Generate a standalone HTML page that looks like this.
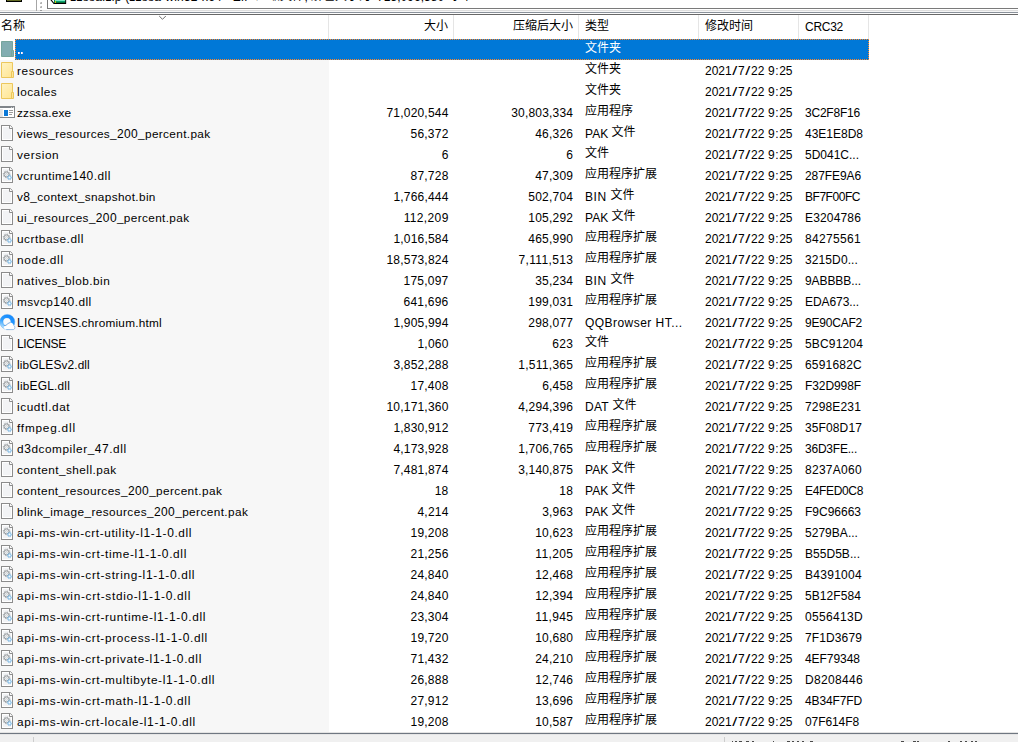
<!DOCTYPE html><html><head><meta charset="utf-8"><title>zzssa.zip</title><style>

html,body{margin:0;padding:0}
body{width:1018px;height:742px;overflow:hidden;background:#fff;position:relative;font-family:"Liberation Sans",sans-serif;font-size:12px;line-height:21px;color:#000}
div,span,svg,i{position:absolute;display:block}
span{white-space:pre;top:1px;height:21px}
.r{left:0;width:1018px;height:21px}
.cj{top:-0.6px;font-family:"Liberation Sans","Noto Sans CJK SC",sans-serif;font-size:12px;color:#000}
.hd{top:15.5px}
.ad{top:-13.6px}
.sel .cj{color:#fff}
.ic{left:0;top:2px;width:16px;height:16px;overflow:visible}
.sz{text-align:right}
.nm{font-size:11.8px}
.nm em{font-style:normal;font-size:12px}
.dt b{font-weight:normal;margin:0 1.5px;transform:scaleX(1.5)}
.dt u{text-decoration:none;padding:0 .55px}
.dt s{text-decoration:none;padding:0 .15px}
.dt u,.dt s{position:static;display:inline}
.dt b{position:static;display:inline-block}
.vl{top:15px;width:1px;height:24px;background:#e5e5e5}

</style></head><body>
<svg width="0" height="0" style="left:-10px;top:-10px"><defs>

<linearGradient id="fg" x1="0" y1="0" x2="1" y2="1"><stop offset="0" stop-color="#fff3c4"/><stop offset="1" stop-color="#ffe48f"/></linearGradient>
<symbol id="i-folder" viewBox="0 0 16 16" overflow="visible">
 <path d="M1.5 0.5H12.5V9.5H13.5V15.5H1.5Z" fill="url(#fg)" stroke="#ecc75c"/>
 <path d="M11.5 15V9.5H13" fill="none" stroke="#ecc75c"/>
</symbol>
<symbol id="i-folders" viewBox="0 0 16 16" overflow="visible">
 <path d="M1.5 0.5H12.5V9.5H13.5V15.5H1.5Z" fill="#82adb1" stroke="#76a59c"/>
 <path d="M11.5 15V9.5H13" fill="none" stroke="#76a59c"/>
</symbol>
<symbol id="i-file" viewBox="0 0 16 16" overflow="visible">
 <path d="M1.5 0.5H10.3L12.5 2.7V15.5H1.5Z" fill="#fff" stroke="#8c8c8c"/>
 <rect x="3" y="2" width="8" height="12" fill="#f2f3f5"/>
 <path d="M9.5 1V3.5H12" fill="#fff" stroke="#8c8c8c"/>
 <path d="M1 0h1v1h-1zM1 15h1v1h-1zM12 15h1v1h-1z" fill="#8c8c8c"/>
</symbol>
<symbol id="i-dll" viewBox="0 0 16 16" overflow="visible">
 <use href="#i-file"/>
 <circle cx="6.5" cy="7.4" r="3.3" fill="none" stroke="#8a8e91" stroke-width=".9" stroke-dasharray="1.1 1.49"/>
 <circle cx="6.5" cy="7.4" r="2.5" fill="#f1f4f6" stroke="#95999c" stroke-width="1"/>
 <circle cx="6.5" cy="7.4" r=".9" fill="#fff" stroke="#b3b7ba" stroke-width=".6"/>
 <circle cx="9.5" cy="10.4" r="2.3" fill="none" stroke="#7bb6e0" stroke-width=".8" stroke-dasharray=".9 .9"/>
 <circle cx="9.5" cy="10.4" r="1.6" fill="#dcedf8" stroke="#77b5e3" stroke-width=".9"/>
 <circle cx="9.5" cy="10.4" r=".5" fill="#fff"/>
</symbol>
<symbol id="i-exe" viewBox="0 0 16 16" overflow="visible">
 <rect x="-1" y="2" width="16" height="12" fill="#fff"/>
 <rect x="-1" y="2" width="16" height="2" fill="#80858a"/>
 <rect x="0" y="5" width="2.8" height="9" fill="#e3e3e3"/>
 <rect x="14" y="2" width="1" height="12" fill="#84888b"/>
 <rect x="-1" y="13" width="16" height="1" fill="#84888b"/>
 <rect x="11" y="3" width="1" height="1" fill="#c8cacc"/><rect x="13" y="3" width="1" height="1" fill="#c8cacc"/>
 <rect x="4" y="6" width="4" height="6" fill="#0a78d7"/>
 <rect x="9" y="6" width="4" height="1" fill="#9b9b9b"/><rect x="9" y="8" width="4" height="1" fill="#9b9b9b"/><rect x="9" y="10" width="3" height="1" fill="#9b9b9b"/>
</symbol>
<linearGradient id="qg" x1="0.75" y1="0.1" x2="0.2" y2="1"><stop offset="0" stop-color="#168aff"/><stop offset=".5" stop-color="#2b9eff"/><stop offset=".8" stop-color="#8fcfff"/><stop offset="1" stop-color="#d4eeff"/></linearGradient>
<symbol id="i-qq" viewBox="0 0 16 16" overflow="visible">
 <path fill-rule="evenodd" fill="url(#qg)" stroke="#4c9ee8" stroke-width=".4" d="M7.3 0.4A7.5 7.5 0 1 0 7.3 15.4A7.5 7.5 0 1 0 7.3 0.4ZM6.9 4.1A3.6 3.6 0 1 1 6.9 11.3A3.6 3.6 0 1 1 6.9 4.1Z"/>
 <circle cx="6.9" cy="7.7" r="3.5" fill="#fbfbfc"/>
 <path d="M3.9 12.6C4.6 11.3 6 11.4 7 10.9C8.2 9 10 8.2 11.4 8.7C12.8 9.2 13.6 10.5 13.7 11.6C15.3 12.1 15.4 15.1 13.4 15.6H6.2C4.6 15.6 3.4 14.2 3.9 12.6Z" fill="#fff"/>
 <path d="M6.2 15.6H13.4C15.4 15.1 15.3 12.1 13.7 11.6" fill="none" stroke="#5a9bdc" stroke-width=".6"/>
 <path d="M4.2 11.7C6 11.6 6.6 10.6 7.6 9.9C8.6 9 9.4 8.7 10.4 8.6" stroke="#3c84d2" stroke-width=".7" fill="none"/>
</symbol>

</defs></svg>
<div style="left:0;top:0;width:1018px;height:10px;background:#fff"></div>
<div style="left:7px;top:0;width:14px;height:1px;background:#636b24"></div>
<div style="left:6px;top:1px;width:16px;height:1px;background:#000"></div><div style="left:6px;top:0;width:1px;height:1px;background:#000"></div><div style="left:21px;top:0;width:1px;height:1px;background:#000"></div>
<div style="left:36px;top:0;width:1px;height:11px;background:#a6a6a6"></div>
<div style="left:40px;top:2px;width:2px;height:2px;background:linear-gradient(135deg,#d4d4d4 50%,#b4b4b4 50%)"></div>
<div style="left:40px;top:6px;width:2px;height:2px;background:linear-gradient(135deg,#d4d4d4 50%,#b4b4b4 50%)"></div>
<div style="left:47px;top:-3px;width:971px;height:12px;border:1px solid #7a7a7a;border-top:none;border-right:none;box-sizing:border-box;background:#fff"></div>
<svg style="left:49px;top:0" width="19" height="5" viewBox="0 0 19 5"><defs><linearGradient id="zg" x1="0" y1="0" x2="0" y2="1"><stop offset="0" stop-color="#b9f8e0"/><stop offset=".3" stop-color="#4fdcaa"/><stop offset=".45" stop-color="#0aa878"/><stop offset=".75" stop-color="#007a50"/><stop offset="1" stop-color="#1f5a10"/></linearGradient></defs><path d="M1.3 -1L4.9 3.5H16.6V-1" fill="#fff" stroke="#000" stroke-width="1.1"/><rect x="5" y="0" width="11.2" height="3" fill="url(#zg)"/><rect x="5" y="0" width="1" height="3" fill="#0b8458"/><rect x="6" y="1" width="1" height="2" fill="#d6c400"/></svg>
<div style="left:0;top:10px;width:1018px;height:1px;background:#dedede"></div>
<div style="left:0;top:11px;width:1018px;height:1px;background:#f6f6f6"></div>
<div style="left:0;top:12px;width:1018px;height:1px;background:#8b929b"></div>
<div style="left:0;top:13px;width:1018px;height:1px;background:#fdfdfd"></div>
<div style="left:0;top:14px;width:1018px;height:1px;background:#686868"></div>
<div style="left:36px;top:0;width:1px;height:11px;background:#a6a6a6"></div>
<div style="left:40px;top:10px;width:2px;height:1px;background:#9a9a9a"></div>
<div style="left:0;top:0;width:1018px;height:5px;overflow:hidden">
<span id="addr1" style="left:70.3px;top:-13.5px;letter-spacing:0.215px">zzssa.zip (zzssa-win32-x64 - ZIP </span>
<span class="cj ad" style="left:256px">压缩文件</span>
<span style="left:304.5px;top:-13.5px">,</span>
<span class="cj ad" style="left:311px">解包大小为</span>
<span style="left:377px;top:-13.5px;letter-spacing:.05px">715,096,380</span>
<span class="cj ad" style="left:450px">字节</span>
</div>
<div style="left:0;top:60px;width:329px;height:672px;background:#f7f7f7"></div>
<div class="vl" style="left:328px"></div>
<div class="vl" style="left:453px"></div>
<div class="vl" style="left:578px"></div>
<div class="vl" style="left:698px"></div>
<div class="vl" style="left:798px"></div>
<div class="vl" style="left:868px"></div>
<svg style="left:158px;top:15px" width="10" height="6" viewBox="0 0 10 6"><path d="M1.2 1L4.5 4.3L7.8 1" fill="none" stroke="#6d6d6d" stroke-width="1"/></svg>
<span class="cj hd" style="left:1px">名称</span>
<span class="cj hd" style="left:424px">大小</span>
<span class="cj hd" style="left:513px">压缩后大小</span>
<span class="cj hd" style="left:585px">类型</span>
<span class="cj hd" style="left:705px">修改时间</span>
<span id="hcrc" style="left:805px;top:17px;letter-spacing:-0.272px">CRC32</span>
<div class="r sel" style="top:39px">
<div style="left:0;top:0;width:15px;height:21px;background:#fff"></div>
<div style="left:15px;top:0;width:854px;height:21px;background:#0078d7"></div>
<div style="left:15px;top:0;width:854px;height:1px;background:repeating-linear-gradient(90deg,#0078d7 0 1px,#ff8728 1px 2px)"></div>
<div style="left:15px;top:20px;width:854px;height:1px;background:repeating-linear-gradient(90deg,#0078d7 0 1px,#ff8728 1px 2px)"></div>
<div style="left:15px;top:0;width:1px;height:21px;background:repeating-linear-gradient(180deg,#0078d7 0 1px,#ff8728 1px 2px)"></div>
<div style="left:868px;top:0;width:1px;height:21px;background:repeating-linear-gradient(180deg,#ff8728 0 1px,#0078d7 1px 2px)"></div>
<svg class="ic" viewBox="0 0 16 16"><use href="#i-folders"/></svg>
<div style="left:18px;top:13px;width:2px;height:2px;background:linear-gradient(90deg,#fff 50%,#d9c8f0 50%)"></div><div style="left:21px;top:13px;width:2px;height:2px;background:linear-gradient(90deg,#fff 50%,#d9c8f0 50%)"></div>
<span class="cj" style="left:585px">文件夹</span>
</div>
<div class="r" style="top:60px">
<svg class="ic" viewBox="0 0 16 16"><use href="#i-folder"/></svg>
<span class="nm" style="left:17px;letter-spacing:0.589px">resources</span>
<span class="cj" style="left:585px">文件夹</span>
<span class="dt" style="left:705px">2021<b>/</b>7<b>/</b>22<s> </s>9<u>:</u>25</span>
</div>
<div class="r" style="top:81px">
<svg class="ic" viewBox="0 0 16 16"><use href="#i-folder"/></svg>
<span class="nm" style="left:17px;letter-spacing:0.479px"><em>l</em>oca<em>l</em>es</span>
<span class="cj" style="left:585px">文件夹</span>
<span class="dt" style="left:705px">2021<b>/</b>7<b>/</b>22<s> </s>9<u>:</u>25</span>
</div>
<div class="r" style="top:102px">
<svg class="ic" viewBox="0 0 16 16"><use href="#i-exe"/></svg>
<span class="nm" style="left:17px;letter-spacing:0.205px">zzssa.exe</span>
<span class="sz" style="right:569.51px;letter-spacing:0.194px">71,020,544</span>
<span class="sz" style="right:444.81px;letter-spacing:0.194px">30,803,334</span>
<span class="cj" style="left:585px">应用程序</span>
<span class="dt" style="left:705px">2021<b>/</b>7<b>/</b>22<s> </s>9<u>:</u>25</span>
<span class="cr" style="left:805px;letter-spacing:-0.213px">3C2F8F16</span>
</div>
<div class="r" style="top:123px">
<svg class="ic" viewBox="0 0 16 16"><use href="#i-file"/></svg>
<span class="nm" style="left:17px;letter-spacing:0.349px">views_resources_<em>200</em>_percent.pak</span>
<span class="sz" style="right:569.48px;letter-spacing:0.216px">56,372</span>
<span class="sz" style="right:444.78px;letter-spacing:0.216px">46,326</span>
<span class="ty" style="left:585px;letter-spacing:0.033px">PAK </span>
<span class="cj" style="left:611.6px">文件</span>
<span class="dt" style="left:705px">2021<b>/</b>7<b>/</b>22<s> </s>9<u>:</u>25</span>
<span class="cr" style="left:805px;letter-spacing:-0.006px">43E1E8D8</span>
</div>
<div class="r" style="top:144px">
<svg class="ic" viewBox="0 0 16 16"><use href="#i-file"/></svg>
<span class="nm" style="left:17px;letter-spacing:0.596px">version</span>
<span class="sz" style="right:569.39px;letter-spacing:0.312px">6</span>
<span class="sz" style="right:444.69px;letter-spacing:0.312px">6</span>
<span class="cj" style="left:585px">文件</span>
<span class="dt" style="left:705px">2021<b>/</b>7<b>/</b>22<s> </s>9<u>:</u>25</span>
<span class="cr" style="left:805px;letter-spacing:-0.003px">5D041C...</span>
</div>
<div class="r" style="top:165px">
<svg class="ic" viewBox="0 0 16 16"><use href="#i-dll"/></svg>
<span class="nm" style="left:17px;letter-spacing:0.465px">vcruntime<em>140</em>.d<em>ll</em></span>
<span class="sz" style="right:569.48px;letter-spacing:0.216px">87,728</span>
<span class="sz" style="right:444.78px;letter-spacing:0.216px">47,309</span>
<span class="cj" style="left:585px">应用程序扩展</span>
<span class="dt" style="left:705px">2021<b>/</b>7<b>/</b>22<s> </s>9<u>:</u>25</span>
<span class="cr" style="left:805px;letter-spacing:-0.09px">287FE9A6</span>
</div>
<div class="r" style="top:186px">
<svg class="ic" viewBox="0 0 16 16"><use href="#i-file"/></svg>
<span class="nm" style="left:17px;letter-spacing:0.354px">v<em>8</em>_context_snapshot.bin</span>
<span class="sz" style="right:569.52px;letter-spacing:0.179px">1,766,444</span>
<span class="sz" style="right:444.77px;letter-spacing:0.23px">502,704</span>
<span class="ty" style="left:585px;letter-spacing:0.564px">BIN </span>
<span class="cj" style="left:610.6px">文件</span>
<span class="dt" style="left:705px">2021<b>/</b>7<b>/</b>22<s> </s>9<u>:</u>25</span>
<span class="cr" style="left:805px;letter-spacing:-0.461px">BF7F00FC</span>
</div>
<div class="r" style="top:207px">
<svg class="ic" viewBox="0 0 16 16"><use href="#i-file"/></svg>
<span class="nm" style="left:17px;letter-spacing:0.362px">ui_resources_<em>200</em>_percent.pak</span>
<span class="sz" style="right:569.34px;letter-spacing:0.357px">112,209</span>
<span class="sz" style="right:444.77px;letter-spacing:0.23px">105,292</span>
<span class="ty" style="left:585px;letter-spacing:0.033px">PAK </span>
<span class="cj" style="left:611.6px">文件</span>
<span class="dt" style="left:705px">2021<b>/</b>7<b>/</b>22<s> </s>9<u>:</u>25</span>
<span class="cr" style="left:805px;letter-spacing:0.158px">E3204786</span>
</div>
<div class="r" style="top:228px">
<svg class="ic" viewBox="0 0 16 16"><use href="#i-dll"/></svg>
<span class="nm" style="left:17px;letter-spacing:0.547px">ucrtbase.d<em>ll</em></span>
<span class="sz" style="right:569.52px;letter-spacing:0.179px">1,016,584</span>
<span class="sz" style="right:444.77px;letter-spacing:0.23px">465,990</span>
<span class="cj" style="left:585px">应用程序扩展</span>
<span class="dt" style="left:705px">2021<b>/</b>7<b>/</b>22<s> </s>9<u>:</u>25</span>
<span class="cr" style="left:805px;letter-spacing:0.326px">84275561</span>
</div>
<div class="r" style="top:249px">
<svg class="ic" viewBox="0 0 16 16"><use href="#i-dll"/></svg>
<span class="nm" style="left:17px;letter-spacing:0.67px">node.d<em>ll</em></span>
<span class="sz" style="right:569.51px;letter-spacing:0.194px">18,573,824</span>
<span class="sz" style="right:444.62px;letter-spacing:0.377px">7,111,513</span>
<span class="cj" style="left:585px">应用程序扩展</span>
<span class="dt" style="left:705px">2021<b>/</b>7<b>/</b>22<s> </s>9<u>:</u>25</span>
<span class="cr" style="left:805px;letter-spacing:0.106px">3215D0...</span>
</div>
<div class="r" style="top:270px">
<svg class="ic" viewBox="0 0 16 16"><use href="#i-file"/></svg>
<span class="nm" style="left:17px;letter-spacing:0.498px">natives_b<em>l</em>ob.bin</span>
<span class="sz" style="right:569.47px;letter-spacing:0.23px">175,097</span>
<span class="sz" style="right:444.78px;letter-spacing:0.216px">35,234</span>
<span class="ty" style="left:585px;letter-spacing:0.564px">BIN </span>
<span class="cj" style="left:610.6px">文件</span>
<span class="dt" style="left:705px">2021<b>/</b>7<b>/</b>22<s> </s>9<u>:</u>25</span>
<span class="cr" style="left:805px;letter-spacing:-0.078px">9ABBBB...</span>
</div>
<div class="r" style="top:291px">
<svg class="ic" viewBox="0 0 16 16"><use href="#i-dll"/></svg>
<span class="nm" style="left:17px;letter-spacing:0.449px">msvcp<em>140</em>.d<em>ll</em></span>
<span class="sz" style="right:569.47px;letter-spacing:0.23px">641,696</span>
<span class="sz" style="right:444.77px;letter-spacing:0.23px">199,031</span>
<span class="cj" style="left:585px">应用程序扩展</span>
<span class="dt" style="left:705px">2021<b>/</b>7<b>/</b>22<s> </s>9<u>:</u>25</span>
<span class="cr" style="left:805px;letter-spacing:-0.078px">EDA673...</span>
</div>
<div class="r" style="top:312px">
<svg class="ic" viewBox="0 0 16 16"><use href="#i-qq"/></svg>
<span class="nm" style="left:17px;letter-spacing:0.221px"><em>LICENSES</em>.chromium.htm<em>l</em></span>
<span class="sz" style="right:569.52px;letter-spacing:0.179px">1,905,994</span>
<span class="sz" style="right:444.77px;letter-spacing:0.23px">298,077</span>
<span class="ty" style="left:585px;letter-spacing:0.454px">QQBrowser HT...</span>
<span class="dt" style="left:705px">2021<b>/</b>7<b>/</b>22<s> </s>9<u>:</u>25</span>
<span class="cr" style="left:805px;letter-spacing:-0.213px">9E90CAF2</span>
</div>
<div class="r" style="top:333px">
<svg class="ic" viewBox="0 0 16 16"><use href="#i-file"/></svg>
<span class="nm" style="left:17px;letter-spacing:-0.351px"><em>LICENSE</em></span>
<span class="sz" style="right:569.51px;letter-spacing:0.194px">1,060</span>
<span class="sz" style="right:444.68px;letter-spacing:0.323px">623</span>
<span class="cj" style="left:585px">文件</span>
<span class="dt" style="left:705px">2021<b>/</b>7<b>/</b>22<s> </s>9<u>:</u>25</span>
<span class="cr" style="left:805px;letter-spacing:0.16px">5BC91204</span>
</div>
<div class="r" style="top:354px">
<svg class="ic" viewBox="0 0 16 16"><use href="#i-dll"/></svg>
<span class="nm" style="left:17px;letter-spacing:0.096px"><em>l</em>ib<em>GLES</em>v<em>2</em>.d<em>ll</em></span>
<span class="sz" style="right:569.52px;letter-spacing:0.179px">3,852,288</span>
<span class="sz" style="right:444.72px;letter-spacing:0.278px">1,511,365</span>
<span class="cj" style="left:585px">应用程序扩展</span>
<span class="dt" style="left:705px">2021<b>/</b>7<b>/</b>22<s> </s>9<u>:</u>25</span>
<span class="cr" style="left:805px;letter-spacing:0.201px">6591682C</span>
</div>
<div class="r" style="top:375px">
<svg class="ic" viewBox="0 0 16 16"><use href="#i-dll"/></svg>
<span class="nm" style="left:17px;letter-spacing:0.194px"><em>l</em>ib<em>EGL</em>.d<em>ll</em></span>
<span class="sz" style="right:569.48px;letter-spacing:0.216px">17,408</span>
<span class="sz" style="right:444.81px;letter-spacing:0.194px">6,458</span>
<span class="cj" style="left:585px">应用程序扩展</span>
<span class="dt" style="left:705px">2021<b>/</b>7<b>/</b>22<s> </s>9<u>:</u>25</span>
<span class="cr" style="left:805px;letter-spacing:-0.088px">F32D998F</span>
</div>
<div class="r" style="top:396px">
<svg class="ic" viewBox="0 0 16 16"><use href="#i-file"/></svg>
<span class="nm" style="left:17px;letter-spacing:0.592px">icudt<em>l</em>.dat</span>
<span class="sz" style="right:569.51px;letter-spacing:0.194px">10,171,360</span>
<span class="sz" style="right:444.82px;letter-spacing:0.179px">4,294,396</span>
<span class="ty" style="left:585px;letter-spacing:0.291px">DAT </span>
<span class="cj" style="left:612.4px">文件</span>
<span class="dt" style="left:705px">2021<b>/</b>7<b>/</b>22<s> </s>9<u>:</u>25</span>
<span class="cr" style="left:805px;letter-spacing:0.158px">7298E231</span>
</div>
<div class="r" style="top:417px">
<svg class="ic" viewBox="0 0 16 16"><use href="#i-dll"/></svg>
<span class="nm" style="left:17px;letter-spacing:0.785px">ffmpeg.d<em>ll</em></span>
<span class="sz" style="right:569.52px;letter-spacing:0.179px">1,830,912</span>
<span class="sz" style="right:444.77px;letter-spacing:0.23px">773,419</span>
<span class="cj" style="left:585px">应用程序扩展</span>
<span class="dt" style="left:705px">2021<b>/</b>7<b>/</b>22<s> </s>9<u>:</u>25</span>
<span class="cr" style="left:805px;letter-spacing:0.119px">35F08D17</span>
</div>
<div class="r" style="top:438px">
<svg class="ic" viewBox="0 0 16 16"><use href="#i-dll"/></svg>
<span class="nm" style="left:17px;letter-spacing:0.563px">d<em>3</em>dcompi<em>l</em>er_<em>47</em>.d<em>ll</em></span>
<span class="sz" style="right:569.52px;letter-spacing:0.179px">4,173,928</span>
<span class="sz" style="right:444.82px;letter-spacing:0.179px">1,706,765</span>
<span class="cj" style="left:585px">应用程序扩展</span>
<span class="dt" style="left:705px">2021<b>/</b>7<b>/</b>22<s> </s>9<u>:</u>25</span>
<span class="cr" style="left:805px;letter-spacing:-0.226px">36D3FE...</span>
</div>
<div class="r" style="top:459px">
<svg class="ic" viewBox="0 0 16 16"><use href="#i-file"/></svg>
<span class="nm" style="left:17px;letter-spacing:0.457px">content_she<em>ll</em>.pak</span>
<span class="sz" style="right:569.52px;letter-spacing:0.179px">7,481,874</span>
<span class="sz" style="right:444.82px;letter-spacing:0.179px">3,140,875</span>
<span class="ty" style="left:585px;letter-spacing:0.033px">PAK </span>
<span class="cj" style="left:611.6px">文件</span>
<span class="dt" style="left:705px">2021<b>/</b>7<b>/</b>22<s> </s>9<u>:</u>25</span>
<span class="cr" style="left:805px;letter-spacing:0.283px">8237A060</span>
</div>
<div class="r" style="top:480px">
<svg class="ic" viewBox="0 0 16 16"><use href="#i-file"/></svg>
<span class="nm" style="left:17px;letter-spacing:0.404px">content_resources_<em>200</em>_percent.pak</span>
<span class="sz" style="right:569.38px;letter-spacing:0.32px">18</span>
<span class="sz" style="right:444.68px;letter-spacing:0.32px">18</span>
<span class="ty" style="left:585px;letter-spacing:0.033px">PAK </span>
<span class="cj" style="left:611.6px">文件</span>
<span class="dt" style="left:705px">2021<b>/</b>7<b>/</b>22<s> </s>9<u>:</u>25</span>
<span class="cr" style="left:805px;letter-spacing:-0.338px">E4FED0C8</span>
</div>
<div class="r" style="top:501px">
<svg class="ic" viewBox="0 0 16 16"><use href="#i-file"/></svg>
<span class="nm" style="left:17px;letter-spacing:0.408px">b<em>l</em>ink_image_resources_<em>200</em>_percent.pak</span>
<span class="sz" style="right:569.51px;letter-spacing:0.194px">4,214</span>
<span class="sz" style="right:444.81px;letter-spacing:0.194px">3,963</span>
<span class="ty" style="left:585px;letter-spacing:0.033px">PAK </span>
<span class="cj" style="left:611.6px">文件</span>
<span class="dt" style="left:705px">2021<b>/</b>7<b>/</b>22<s> </s>9<u>:</u>25</span>
<span class="cr" style="left:805px;letter-spacing:-0.006px">F9C96663</span>
</div>
<div class="r" style="top:522px">
<svg class="ic" viewBox="0 0 16 16"><use href="#i-dll"/></svg>
<span class="nm" style="left:17px;letter-spacing:0.62px">api-ms-win-crt-uti<em>l</em>ity-<em>l1</em>-<em>1</em>-<em>0</em>.d<em>ll</em></span>
<span class="sz" style="right:569.48px;letter-spacing:0.216px">19,208</span>
<span class="sz" style="right:444.78px;letter-spacing:0.216px">10,623</span>
<span class="cj" style="left:585px">应用程序扩展</span>
<span class="dt" style="left:705px">2021<b>/</b>7<b>/</b>22<s> </s>9<u>:</u>25</span>
<span class="cr" style="left:805px;letter-spacing:0.031px">5279BA...</span>
</div>
<div class="r" style="top:543px">
<svg class="ic" viewBox="0 0 16 16"><use href="#i-dll"/></svg>
<span class="nm" style="left:17px;letter-spacing:0.667px">api-ms-win-crt-time-<em>l1</em>-<em>1</em>-<em>0</em>.d<em>ll</em></span>
<span class="sz" style="right:569.48px;letter-spacing:0.216px">21,256</span>
<span class="sz" style="right:444.63px;letter-spacing:0.365px">11,205</span>
<span class="cj" style="left:585px">应用程序扩展</span>
<span class="dt" style="left:705px">2021<b>/</b>7<b>/</b>22<s> </s>9<u>:</u>25</span>
<span class="cr" style="left:805px;letter-spacing:0.033px">B55D5B...</span>
</div>
<div class="r" style="top:564px">
<svg class="ic" viewBox="0 0 16 16"><use href="#i-dll"/></svg>
<span class="nm" style="left:17px;letter-spacing:0.674px">api-ms-win-crt-string-<em>l1</em>-<em>1</em>-<em>0</em>.d<em>ll</em></span>
<span class="sz" style="right:569.48px;letter-spacing:0.216px">24,840</span>
<span class="sz" style="right:444.78px;letter-spacing:0.216px">12,468</span>
<span class="cj" style="left:585px">应用程序扩展</span>
<span class="dt" style="left:705px">2021<b>/</b>7<b>/</b>22<s> </s>9<u>:</u>25</span>
<span class="cr" style="left:805px;letter-spacing:0.283px">B4391004</span>
</div>
<div class="r" style="top:585px">
<svg class="ic" viewBox="0 0 16 16"><use href="#i-dll"/></svg>
<span class="nm" style="left:17px;letter-spacing:0.69px">api-ms-win-crt-stdio-<em>l1</em>-<em>1</em>-<em>0</em>.d<em>ll</em></span>
<span class="sz" style="right:569.48px;letter-spacing:0.216px">24,840</span>
<span class="sz" style="right:444.78px;letter-spacing:0.216px">12,394</span>
<span class="cj" style="left:585px">应用程序扩展</span>
<span class="dt" style="left:705px">2021<b>/</b>7<b>/</b>22<s> </s>9<u>:</u>25</span>
<span class="cr" style="left:805px;letter-spacing:0.076px">5B12F584</span>
</div>
<div class="r" style="top:606px">
<svg class="ic" viewBox="0 0 16 16"><use href="#i-dll"/></svg>
<span class="nm" style="left:17px;letter-spacing:0.668px">api-ms-win-crt-runtime-<em>l1</em>-<em>1</em>-<em>0</em>.d<em>ll</em></span>
<span class="sz" style="right:569.48px;letter-spacing:0.216px">23,304</span>
<span class="sz" style="right:444.63px;letter-spacing:0.365px">11,945</span>
<span class="cj" style="left:585px">应用程序扩展</span>
<span class="dt" style="left:705px">2021<b>/</b>7<b>/</b>22<s> </s>9<u>:</u>25</span>
<span class="cr" style="left:805px;letter-spacing:0.326px">0556413D</span>
</div>
<div class="r" style="top:627px">
<svg class="ic" viewBox="0 0 16 16"><use href="#i-dll"/></svg>
<span class="nm" style="left:17px;letter-spacing:0.663px">api-ms-win-crt-process-<em>l1</em>-<em>1</em>-<em>0</em>.d<em>ll</em></span>
<span class="sz" style="right:569.48px;letter-spacing:0.216px">19,720</span>
<span class="sz" style="right:444.78px;letter-spacing:0.216px">10,680</span>
<span class="cj" style="left:585px">应用程序扩展</span>
<span class="dt" style="left:705px">2021<b>/</b>7<b>/</b>22<s> </s>9<u>:</u>25</span>
<span class="cr" style="left:805px;letter-spacing:0.119px">7F1D3679</span>
</div>
<div class="r" style="top:648px">
<svg class="ic" viewBox="0 0 16 16"><use href="#i-dll"/></svg>
<span class="nm" style="left:17px;letter-spacing:0.663px">api-ms-win-crt-private-<em>l1</em>-<em>1</em>-<em>0</em>.d<em>ll</em></span>
<span class="sz" style="right:569.48px;letter-spacing:0.216px">71,432</span>
<span class="sz" style="right:444.78px;letter-spacing:0.216px">24,210</span>
<span class="cj" style="left:585px">应用程序扩展</span>
<span class="dt" style="left:705px">2021<b>/</b>7<b>/</b>22<s> </s>9<u>:</u>25</span>
<span class="cr" style="left:805px;letter-spacing:-0.049px">4EF79348</span>
</div>
<div class="r" style="top:669px">
<svg class="ic" viewBox="0 0 16 16"><use href="#i-dll"/></svg>
<span class="nm" style="left:17px;letter-spacing:0.661px">api-ms-win-crt-mu<em>l</em>tibyte-<em>l1</em>-<em>1</em>-<em>0</em>.d<em>ll</em></span>
<span class="sz" style="right:569.48px;letter-spacing:0.216px">26,888</span>
<span class="sz" style="right:444.78px;letter-spacing:0.216px">12,746</span>
<span class="cj" style="left:585px">应用程序扩展</span>
<span class="dt" style="left:705px">2021<b>/</b>7<b>/</b>22<s> </s>9<u>:</u>25</span>
<span class="cr" style="left:805px;letter-spacing:0.326px">D8208446</span>
</div>
<div class="r" style="top:690px">
<svg class="ic" viewBox="0 0 16 16"><use href="#i-dll"/></svg>
<span class="nm" style="left:17px;letter-spacing:0.669px">api-ms-win-crt-math-<em>l1</em>-<em>1</em>-<em>0</em>.d<em>ll</em></span>
<span class="sz" style="right:569.48px;letter-spacing:0.216px">27,912</span>
<span class="sz" style="right:444.78px;letter-spacing:0.216px">13,696</span>
<span class="cj" style="left:585px">应用程序扩展</span>
<span class="dt" style="left:705px">2021<b>/</b>7<b>/</b>22<s> </s>9<u>:</u>25</span>
<span class="cr" style="left:805px;letter-spacing:-0.129px">4B34F7FD</span>
</div>
<div class="r" style="top:711px">
<svg class="ic" viewBox="0 0 16 16"><use href="#i-dll"/></svg>
<span class="nm" style="left:17px;letter-spacing:0.633px">api-ms-win-crt-<em>l</em>oca<em>l</em>e-<em>l1</em>-<em>1</em>-<em>0</em>.d<em>ll</em></span>
<span class="sz" style="right:569.48px;letter-spacing:0.216px">19,208</span>
<span class="sz" style="right:444.78px;letter-spacing:0.216px">10,587</span>
<span class="cj" style="left:585px">应用程序扩展</span>
<span class="dt" style="left:705px">2021<b>/</b>7<b>/</b>22<s> </s>9<u>:</u>25</span>
<span class="cr" style="left:805px;letter-spacing:-0.088px">07F614F8</span>
</div>
<div style="left:0;top:732px;width:1018px;height:1px;background:#e3e3e3"></div>
<div style="left:0;top:733px;width:1018px;height:1px;background:#6f7781"></div>
<div style="left:0;top:734px;width:1018px;height:1px;background:#e6e6e6"></div>
<div style="left:0;top:735px;width:1018px;height:7px;background:#f0f0f0"></div>
<div style="left:33px;top:737px;width:1px;height:5px;background:#cdcdcd"></div>
<div style="left:724px;top:737px;width:1px;height:5px;background:#cdcdcd"></div>
<div style="left:731.6px;top:741px;width:1.4px;height:1px;background:#4a4a4a"></div>
<div style="left:735.3px;top:741px;width:2.2px;height:1px;background:#4a4a4a"></div>
<div style="left:739px;top:741px;width:3.0px;height:1px;background:#4a4a4a"></div>
<div style="left:746.3px;top:741px;width:3.0px;height:1px;background:#4a4a4a"></div>
<div style="left:752.2px;top:741px;width:1.5px;height:1px;background:#4a4a4a"></div>
<div style="left:772.8px;top:741px;width:1.5px;height:1px;background:#4a4a4a"></div>
<div style="left:786.8px;top:741px;width:3.0px;height:1px;background:#4a4a4a"></div>
<div style="left:792px;top:741px;width:2.2px;height:1px;background:#4a4a4a"></div>
<div style="left:797.1px;top:741px;width:2.3px;height:1px;background:#4a4a4a"></div>
<div style="left:801.6px;top:741px;width:2.2px;height:1px;background:#4a4a4a"></div>
<div style="left:810.4px;top:741px;width:3.0px;height:1px;background:#4a4a4a"></div>
<div style="left:901.2px;top:741px;width:2.9px;height:1px;background:#4a4a4a"></div>
<div style="left:913px;top:741px;width:2.5px;height:1px;background:#4a4a4a"></div>
<div style="left:916.5px;top:741px;width:2.3px;height:1px;background:#4a4a4a"></div>
<div style="left:948.3px;top:741px;width:1.5px;height:1px;background:#4a4a4a"></div>
<div style="left:960px;top:741px;width:1.6px;height:1px;background:#4a4a4a"></div>
<div style="left:964.5px;top:741px;width:2.2px;height:1px;background:#4a4a4a"></div>
<div style="left:971px;top:741px;width:2.3px;height:1px;background:#4a4a4a"></div>
<div style="left:974.8px;top:741px;width:2.2px;height:1px;background:#4a4a4a"></div>
</body></html>
